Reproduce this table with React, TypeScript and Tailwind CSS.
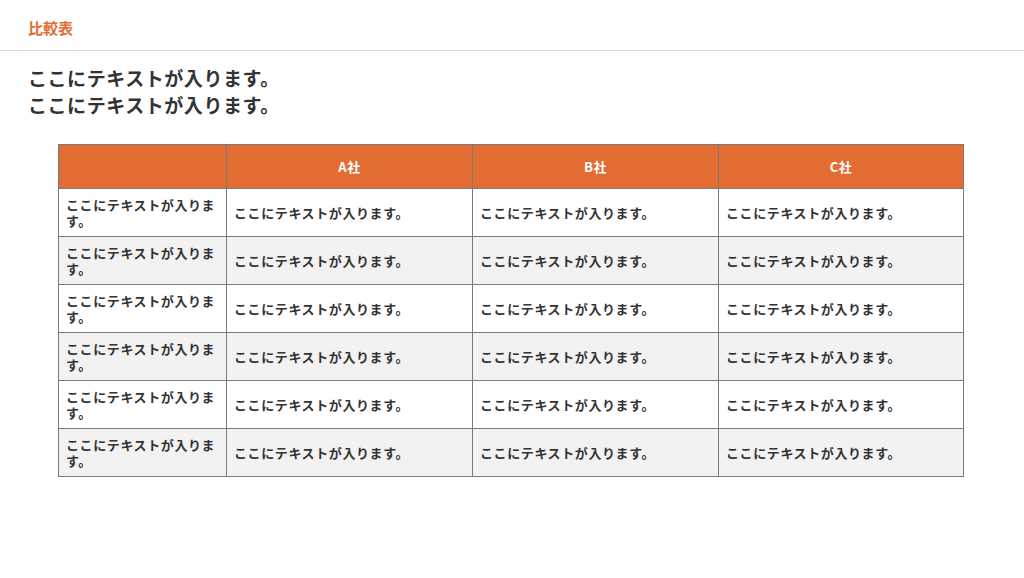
import React from 'react';

const TEXT = 'ここにテキストが入ります。';
const companies = ['A社', 'B社', 'C社'];
const rows = [0, 1, 2, 3, 4, 5];

export default function App() {
  return (
    <div
      className="w-[1024px] h-[578px] bg-white text-[#333333] overflow-hidden"
      style={{ fontFamily: '"Noto Sans CJK JP", "Noto Sans", sans-serif' }}
    >
      {/* Page header */}
      <div className="h-[51px] border-b border-[#d9d9d9] flex items-center px-[28px] pt-[6px]">
        <span className="text-[15px] font-bold text-[#e36c33]">比較表</span>
      </div>

      <div className="px-[28px] pt-[13px]">
        <h1 className="text-[19px] font-bold leading-[27px] tracking-[0.55px] text-[#333333]">
          {TEXT}
          <br />
          {TEXT}
        </h1>
      </div>

      <div className="pl-[58px] pt-[26px]">
        <table className="border-collapse w-[905px] table-fixed text-[13px] font-bold tracking-[0.6px]">
          <colgroup>
            <col className="w-[168px]" />
            <col className="w-[246px]" />
            <col className="w-[246px]" />
            <col className="w-[245px]" />
          </colgroup>
          <thead>
            <tr className="h-[44px] bg-[#e36c33]">
              <th className="border border-[#7a7a7a]" />
              {companies.map((c) => (
                <th key={c} className="border border-[#7a7a7a] text-white text-center font-bold">
                  {c}
                </th>
              ))}
            </tr>
          </thead>
          <tbody>
            {rows.map((i) => (
              <tr key={i} className={`h-[48px] ${i % 2 === 1 ? 'bg-[#f2f2f2]' : 'bg-white'}`}>
                <td className="border border-[#7a7a7a] px-[7px] leading-[16px] text-left align-middle">
                  {TEXT}
                </td>
                {companies.map((c) => (
                  <td key={c} className="border border-[#7a7a7a] px-[7px] text-left align-middle whitespace-nowrap">
                    {TEXT}
                  </td>
                ))}
              </tr>
            ))}
          </tbody>
        </table>
      </div>
    </div>
  );
}
